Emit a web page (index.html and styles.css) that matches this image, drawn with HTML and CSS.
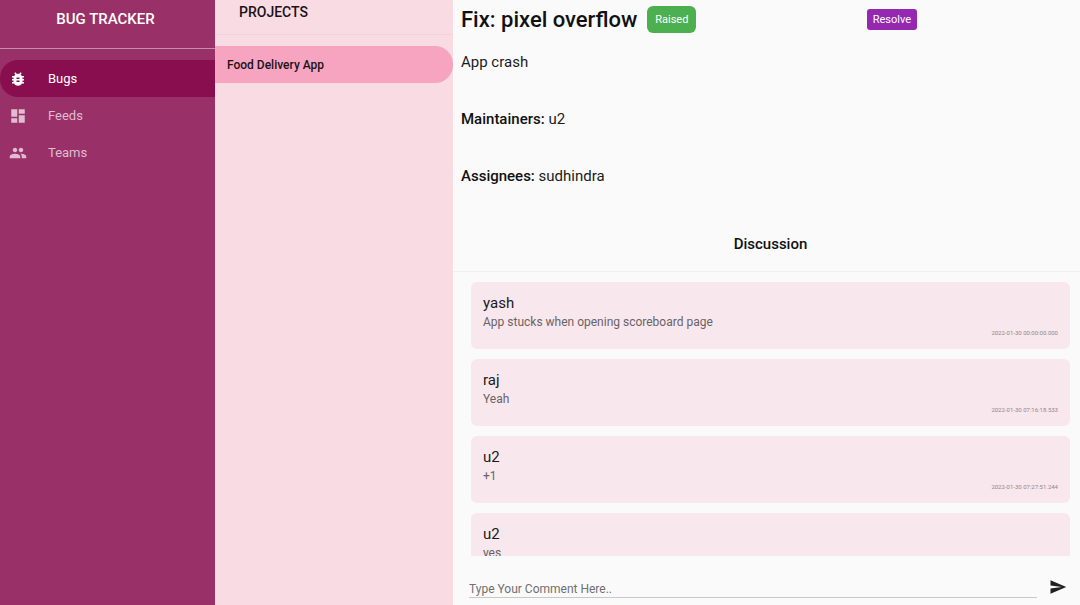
FILE: index.html
```html
<!DOCTYPE html>
<html lang="en">
<head>
<meta charset="utf-8">
<meta name="viewport" content="width=device-width, initial-scale=1">
<title>Bug Tracker</title>
<link rel="stylesheet" href="styles.css">
</head>
<body>
<div class="app">
  <aside class="sidebar">
    <h1 class="brand">BUG TRACKER</h1>
    <nav class="nav">
      <a class="nav-item active" href="#bugs">
        <svg class="nav-icon" viewBox="0 0 24 24"><path d="M20 8h-2.81c-.45-.78-1.07-1.45-1.82-1.96L17 4.41 15.59 3l-2.17 2.17C12.96 5.06 12.49 5 12 5s-.96.06-1.41.17L8.41 3 7 4.41l1.62 1.63C7.88 6.55 7.26 7.22 6.81 8H4v2h2.09c-.05.33-.09.66-.09 1v1H4v2h2v1c0 .34.04.67.09 1H4v2h2.81c1.04 1.79 2.97 3 5.19 3s4.15-1.21 5.19-3H20v-2h-2.09c.05-.33.09-.66.09-1v-1h2v-2h-2v-1c0-.34-.04-.67-.09-1H20V8zm-6 8h-4v-2h4v2zm0-4h-4v-2h4v2z"/></svg>
        <span>Bugs</span>
      </a>
      <a class="nav-item" href="#feeds">
        <svg class="nav-icon" viewBox="0 0 24 24"><path d="M3 13h8V3H3v10zm0 8h8v-6H3v6zm10 0h8V11h-8v10zm0-18v6h8V3h-8z"/></svg>
        <span>Feeds</span>
      </a>
      <a class="nav-item" href="#teams">
        <svg class="nav-icon" viewBox="0 0 24 24"><path d="M16 11c1.66 0 2.99-1.34 2.99-3S17.66 5 16 5s-3 1.34-3 3 1.34 3 3 3zm-8 0c1.66 0 2.99-1.34 2.99-3S9.66 5 8 5 5 6.34 5 8s1.34 3 3 3zm0 2c-2.33 0-7 1.17-7 3.5V19h14v-2.500c0-2.330-4.670-3.500-7-3.500zm8 0c-.29 0-.62.02-.97.05 1.16.84 1.97 1.970 1.970 3.450V19h6v-2.500c0-2.330-4.670-3.500-7-3.500z"/></svg>
        <span>Teams</span>
      </a>
    </nav>
  </aside>

  <section class="projects">
    <h2 class="projects-title">PROJECTS</h2>
    <a class="project" href="#food-delivery-app">Food Delivery App</a>
  </section>

  <main class="detail">
    <header class="bug-header">
      <div class="bug-heading">
        <h2 class="bug-title">Fix: pixel overflow</h2>
        <span class="status">Raised</span>
      </div>
      <button class="resolve" type="button">Resolve</button>
    </header>
    <div class="bug-info">
      <p class="line">App crash</p>
      <p class="line"><strong>Maintainers:</strong> u2</p>
      <p class="line"><strong>Assignees:</strong> sudhindra</p>
    </div>
    <h3 class="discussion-title">Discussion</h3>
    <div class="comments">
      <article class="comment">
        <h4 class="author">yash</h4>
        <p class="message">App stucks when opening scoreboard page</p>
        <time class="stamp">2022-01-30 00:00:00.000</time>
      </article>
      <article class="comment">
        <h4 class="author">raj</h4>
        <p class="message">Yeah</p>
        <time class="stamp">2022-01-30 07:16:18.533</time>
      </article>
      <article class="comment">
        <h4 class="author">u2</h4>
        <p class="message">+1</p>
        <time class="stamp">2022-01-30 07:27:51.244</time>
      </article>
      <article class="comment">
        <h4 class="author">u2</h4>
        <p class="message">yes</p>
      </article>
    </div>
    <form class="composer">
      <input class="composer-input" type="text" aria-label="Comment" placeholder="Type Your Comment Here..">
      <button class="send" type="button" aria-label="Send">
        <svg class="send-icon" viewBox="0 0 24 24"><path d="M2.010 21L23 12 2.010 3 2 10l15 2-15 2z"/></svg>
      </button>
    </form>
  </main>
</div>
</body>
</html>
```
FILE: styles.css
```css
* {
  box-sizing: border-box;
}

body,
h1,
h2,
h3,
h4,
p {
  margin: 0;
}

body {
  background: #fafafa;
  color: #1c1a1b;
  font-family: Roboto, "Liberation Sans", sans-serif;
  font-size: 15px;
}

a {
  color: inherit;
  text-decoration: none;
}

.app {
  display: grid;
  grid-template-columns: 215px 238px minmax(0, 1fr);
  height: 100vh;
}

.sidebar {
  background: #993067;
  color: #fff;
}

.brand {
  padding: 9px 4px 19px 0;
  border-bottom: 1px solid #c68dab;
  font-size: 15px;
  font-weight: 500;
  line-height: 20px;
  text-align: center;
}

.nav {
  padding-top: 11px;
}

.nav-item {
  display: flex;
  align-items: center;
  gap: 21px;
  height: 37px;
  padding-left: 9px;
  border-radius: 18px 0 0 18px;
  color: #dfbdd0;
  font-size: 13px;
}

.nav-item.active {
  background: #880e4f;
  color: #fff;
}

.nav-icon {
  width: 18px;
  height: 18px;
  fill: currentColor;
}

.projects {
  background: #f8dbe3;
  color: #1c1216;
}

.projects-title {
  margin-bottom: 11px;
  padding: 2px 24px 12px;
  border-bottom: 1px solid #f2d3dc;
  font-size: 14px;
  font-weight: 500;
  line-height: 20px;
}

.project {
  display: block;
  padding: 9px 12px 8px;
  border-radius: 0 18px 18px 0;
  background: #f6a4c0;
  font-size: 12px;
  font-weight: 500;
  line-height: 20px;
}

.detail {
  display: flex;
  flex-direction: column;
  min-height: 0;
}

.bug-header {
  display: grid;
  grid-template-columns: 2fr 3fr;
  align-items: center;
  height: 39px;
}

.bug-heading {
  display: flex;
  align-items: center;
  gap: 10px;
  padding-left: 8px;
  white-space: nowrap;
}

.bug-title {
  color: #111;
  font-size: 22px;
  font-weight: 500;
}

.status {
  padding: 4px 8px;
  border-radius: 6px;
  background: #4caf50;
  color: #fff;
  font-size: 11px;
  line-height: 19px;
}

.resolve {
  justify-self: center;
  padding: 0 6px;
  border: 0;
  border-radius: 3px;
  background: #9627b0;
  color: #fff;
  font: 11px/21px Roboto, "Liberation Sans", sans-serif;
}

.bug-info {
  display: grid;
  gap: 37px;
  padding: 13px 8px 0;
}

.line {
  line-height: 20px;
}

.line strong {
  color: #111;
  font-weight: 500;
}

.discussion-title {
  padding: 48px 0 17px 8px;
  border-bottom: 1px solid #f0f0f0;
  color: #111;
  font-size: 15px;
  font-weight: 500;
  line-height: 20px;
  text-align: center;
}

.comments {
  flex: 1;
  display: flex;
  flex-direction: column;
  gap: 10px;
  min-height: 0;
  padding: 10px 10px 0 18px;
  overflow: hidden;
}

.comment {
  flex: none;
  height: 67px;
  padding: 11px 12px;
  border-radius: 6px;
  background: #f8e8ed;
}

.author {
  font-size: 15px;
  font-weight: 400;
  line-height: 20px;
}

.message {
  color: #6a6366;
  font-size: 12px;
  line-height: 19px;
}

.stamp {
  display: block;
  color: #918589;
  font-size: 6px;
  line-height: 2px;
  text-align: right;
}

.composer {
  display: flex;
  gap: 12px;
  padding: 22px 13px 7px 16px;
}

.composer-input {
  flex: 1;
  min-width: 0;
  height: 20px;
  padding: 2px 0 0;
  border: 0;
  border-bottom: 1px solid #c8c8c8;
  outline: 0;
  background: transparent;
  color: #1c1a1b;
  font: 12px/17px Roboto, "Liberation Sans", sans-serif;
}

.composer-input::placeholder {
  color: #707070;
}

.send {
  display: flex;
  padding: 0;
  border: 0;
  background: transparent;
}

.send-icon {
  width: 18px;
  height: 18px;
  fill: #202020;
}
```
